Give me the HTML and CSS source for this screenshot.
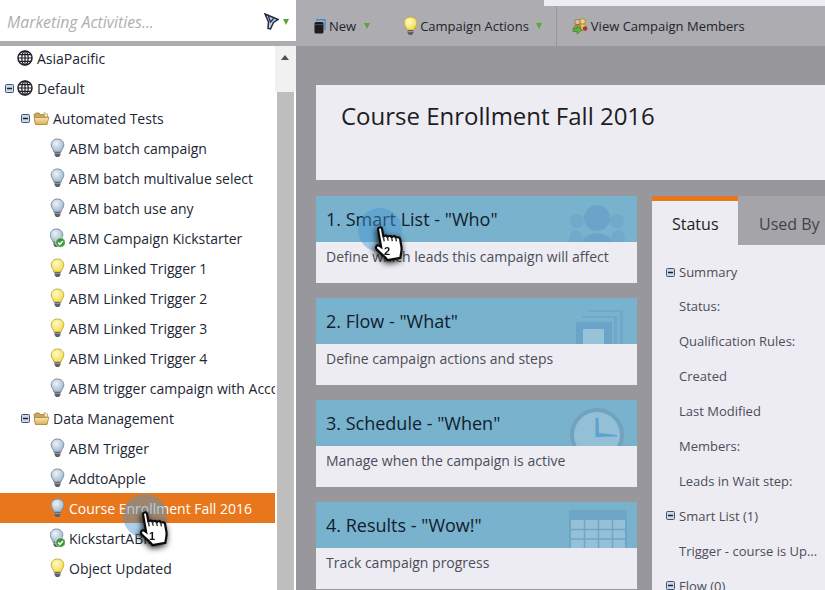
FILE: index.html
```html
<!DOCTYPE html>
<html lang="en">
<head>
    <meta charset="UTF-8">
    <meta name="viewport" content="width=device-width, initial-scale=1.0">
    <title>Course Enrollment Fall 2016</title>
    <link rel="stylesheet" href="styles.css">
</head>
<body>
    <!-- Shared icons -->
    <svg class="defs" aria-hidden="true">
        <defs>
            <radialGradient id="grayGlass" cx="40%" cy="35%" r="70%">
                <stop offset="0" stop-color="#eef3f8"/>
                <stop offset="1" stop-color="#9db4c9"/>
            </radialGradient>
            <radialGradient id="yellowGlass" cx="40%" cy="35%" r="70%">
                <stop offset="0" stop-color="#fffbc4"/>
                <stop offset="1" stop-color="#f3da4a"/>
            </radialGradient>
            <linearGradient id="folderFill" x1="0" y1="0" x2="0" y2="1">
                <stop offset="0" stop-color="#fbe9b4"/>
                <stop offset="1" stop-color="#dcae55"/>
            </linearGradient>
        </defs>
        <symbol id="globe" viewBox="0 0 16 16">
            <circle cx="8" cy="8" r="7" fill="#fff" stroke="#1f1f23" stroke-width="1.500"/>
            <ellipse cx="8" cy="8" rx="3.200" ry="7" fill="none" stroke="#1f1f23" stroke-width="1.200"/>
            <path d="M8 1v14M1 8h14M2 4.600h12M2 11.400h12" fill="none" stroke="#1f1f23" stroke-width="1.200"/>
        </symbol>
        <symbol id="minus" viewBox="0 0 9 9">
            <rect x=".5" y=".5" width="8" height="8" rx="1" fill="#cfd8e4" stroke="#3d5477"/>
            <path d="M2 4.500h5" stroke="#14233c" stroke-width="1.500"/>
        </symbol>
        <symbol id="folder" viewBox="0 0 17 15">
            <path d="M1 3.500 3 2h3l1.500 1.500H14V13H2.500z" fill="#c9a65c" stroke="#8f7433" stroke-width=".7"/>
            <path d="M2.500 13.500 1 6.500h11.500L16 6l-2 7.500z" fill="url(#folderFill)" stroke="#a0803a" stroke-width=".7"/>
            <path d="M11 1.500 14.500 3v3h-3z" fill="#f5e7bd" stroke="#a0803a" stroke-width=".5"/>
        </symbol>
        <symbol id="bulbGray" viewBox="0 0 15 20">
            <path d="M7.500 1C3.800 1 1.200 3.600 1.200 6.800c0 3 2.300 4.400 2.800 7.200h7c.5-2.800 2.800-4.200 2.800-7.200C13.800 3.600 11.200 1 7.500 1z" fill="url(#grayGlass)" stroke="#7a8ea3"/>
            <path d="M4.500 14h6v3l-1.500 2h-3l-1.500-2z" fill="#5f6368"/>
            <path d="M4.500 15.400h6" stroke="#b5b8bc" stroke-width=".7"/>
        </symbol>
        <symbol id="bulbYellow" viewBox="0 0 15 20">
            <path d="M7.500 1C3.800 1 1.200 3.600 1.200 6.800c0 3 2.300 4.400 2.800 7.200h7c.5-2.800 2.800-4.200 2.800-7.200C13.800 3.600 11.200 1 7.500 1z" fill="url(#yellowGlass)" stroke="#c8ad3a"/>
            <path d="M4.500 14h6v3l-1.500 2h-3l-1.500-2z" fill="#5f6368"/>
            <path d="M4.500 15.400h6" stroke="#b5b8bc" stroke-width=".7"/>
        </symbol>
        <symbol id="bulbCheck" viewBox="0 0 15 20">
            <use href="#bulbGray" width="15" height="20" x="-1" y="0"/>
            <circle cx="10.500" cy="14.500" r="4.800" fill="#3b9a3f" stroke="#fff" stroke-width=".6"/>
            <path d="M8.200 14.600l1.700 1.700 3-3.200" fill="none" stroke="#fff" stroke-width="1.500"/>
        </symbol>
        <symbol id="pointer" viewBox="0 0 40 42">
            <g transform="rotate(-10 9 3)" stroke="#0c0c0c">
                <path d="M7 3c0-2 4-2 4 0v9c0-2 4-2 4 0v1c0-2 4-2 4 0v1c0-2 4-2 4 0v1c0-1 4-1 4 1v8c0 5-2 7-3 11H11c-1-3-6-8-9-13-1-2 1-4 3-3l2 2z" fill="#fff" stroke-width="2.200"/>
                <path d="M11 12v4M15 13v3M19 14v3M23 15v3" fill="none" stroke-width="1.200"/>
            </g>
        </symbol>
    </svg>

    <div class="app">
        <!-- Left tree -->
        <aside class="side">
            <div class="side-head">
                <span class="search">Marketing Activities...</span>
                <svg class="funnel" width="15" height="17" viewBox="0 0 15 17">
                    <path d="M1 1 14 6.500 9.500 9.500 6.500 16 4 15.500 4.500 9z" fill="#c7ced9" stroke="#1f2c47" stroke-width="1.500"/>
                    <path d="M4 2 6.500 9l3-3.500" fill="none" stroke="#1f2c47" stroke-width="1.200"/>
                </svg>
                <span class="arrow"></span>
            </div>
            <div class="side-body">
                <div class="tree">
                    <div class="rows">
                        <div class="row lvl1"><svg class="ico16"><use href="#globe"/></svg><span>AsiaPacific</span></div>
                        <div class="row lvl0"><svg class="tog"><use href="#minus"/></svg><svg class="ico16"><use href="#globe"/></svg><span>Default</span></div>
                        <div class="row lvl2"><svg class="tog"><use href="#minus"/></svg><svg class="ico-folder"><use href="#folder"/></svg><span>Automated Tests</span></div>
                        <div class="row leaf"><svg class="ico-bulb"><use href="#bulbGray"/></svg><span>ABM batch campaign</span></div>
                        <div class="row leaf"><svg class="ico-bulb"><use href="#bulbGray"/></svg><span>ABM batch multivalue select</span></div>
                        <div class="row leaf"><svg class="ico-bulb"><use href="#bulbGray"/></svg><span>ABM batch use any</span></div>
                        <div class="row leaf"><svg class="ico-bulb"><use href="#bulbCheck"/></svg><span>ABM Campaign Kickstarter</span></div>
                        <div class="row leaf"><svg class="ico-bulb"><use href="#bulbYellow"/></svg><span>ABM Linked Trigger 1</span></div>
                        <div class="row leaf"><svg class="ico-bulb"><use href="#bulbYellow"/></svg><span>ABM Linked Trigger 2</span></div>
                        <div class="row leaf"><svg class="ico-bulb"><use href="#bulbYellow"/></svg><span>ABM Linked Trigger 3</span></div>
                        <div class="row leaf"><svg class="ico-bulb"><use href="#bulbYellow"/></svg><span>ABM Linked Trigger 4</span></div>
                        <div class="row leaf"><svg class="ico-bulb"><use href="#bulbGray"/></svg><span>ABM trigger campaign with Account</span></div>
                        <div class="row lvl2"><svg class="tog"><use href="#minus"/></svg><svg class="ico-folder"><use href="#folder"/></svg><span>Data Management</span></div>
                        <div class="row leaf"><svg class="ico-bulb"><use href="#bulbGray"/></svg><span>ABM Trigger</span></div>
                        <div class="row leaf"><svg class="ico-bulb"><use href="#bulbGray"/></svg><span>AddtoApple</span></div>
                        <div class="row leaf selected"><svg class="ico-bulb"><use href="#bulbGray"/></svg><span>Course Enrollment Fall 2016</span></div>
                        <div class="row leaf"><svg class="ico-bulb"><use href="#bulbCheck"/></svg><span>KickstartABM</span></div>
                        <div class="row leaf"><svg class="ico-bulb"><use href="#bulbYellow"/></svg><span>Object Updated</span></div>
                    </div>
                </div>
                <div class="scrollbar">
                    <div class="scroll-up"><span class="scroll-arrow"></span></div>
                    <div class="scroll-track"><div class="scroll-thumb"></div></div>
                </div>
            </div>
        </aside>

        <!-- Main area -->
        <main class="main">
            <div class="strip"><div class="strip-gray"></div><div class="strip-light"></div></div>
            <div class="toolbar">
                <div class="tool tool-new">
                    <svg width="12" height="15" viewBox="0 0 12 15">
                        <path d="M3 2V.8h8V11" fill="none" stroke="#3f8fd0" stroke-width="1.400"/>
                        <rect x=".5" y="3" width="9" height="11.500" rx="1.500" fill="#1c1c1e"/>
                        <path d="M.5 5.500h9" stroke="#55565a" stroke-width=".8"/>
                    </svg>
                    <span>New</span><span class="arrow"></span>
                </div>
                <div class="tool tool-actions">
                    <svg class="ico-bulb"><use href="#bulbYellow"/></svg>
                    <span>Campaign Actions</span><span class="arrow"></span>
                </div>
                <div class="tool-sep"></div>
                <div class="tool tool-members">
                    <svg width="16" height="16" viewBox="0 0 16 16">
                        <circle cx="10.500" cy="3.500" r="2.800" fill="#f3d36b" stroke="#8a7330" stroke-width=".6"/>
                        <path d="M7 12c0-4 1-6 3.500-6S15 8 15 12z" fill="#e8c75c" stroke="#8a7330" stroke-width=".6"/>
                        <circle cx="5.500" cy="4" r="2.800" fill="#e4bb8c" stroke="#6e5330" stroke-width=".6"/>
                        <path d="M2 12c0-4 1-5.500 3.500-5.500S9 8 9 12z" fill="#b88f5e" stroke="#6e5330" stroke-width=".6"/>
                        <circle cx="13" cy="10.500" r="2.200" fill="#b5303a"/>
                        <path d="M1 10.500h4V8l5 4-5 4v-2.500H1z" fill="#57b83a" stroke="#2e7a22" stroke-width=".6"/>
                    </svg>
                    <span>View Campaign Members</span>
                </div>
            </div>

            <div class="content">
                <div class="title-card">
                    <h1>Course Enrollment Fall 2016</h1>
                </div>
                <div class="columns">
                    <div class="steps">
                        <section class="step">
                            <div class="step-head">
                                <h2>1. Smart List - "Who"</h2>
                                <svg class="step-ico" width="60" height="46" viewBox="0 0 60 46">
                                    <circle cx="8" cy="25" r="7" fill="#70a9c9"/>
                                    <circle cx="48" cy="25" r="7" fill="#70a9c9"/>
                                    <ellipse cx="7" cy="44" rx="7" ry="10" fill="#70a9c9"/>
                                    <ellipse cx="49" cy="44" rx="7" ry="10" fill="#70a9c9"/>
                                    <circle cx="28" cy="22" r="13" fill="#6aa4c9"/>
                                    <ellipse cx="28" cy="50" rx="16" ry="13" fill="#6aa4c9"/>
                                </svg>
                            </div>
                            <p>Define which leads this campaign will affect</p>
                        </section>
                        <section class="step">
                            <div class="step-head">
                                <h2>2. Flow - "What"</h2>
                                <svg class="step-ico" width="60" height="46" viewBox="0 0 60 46">
                                    <path d="M19 12h35v34h-3V14H19z" fill="#6fa8c8"/>
                                    <path d="M13 18h35v28h-3V20H13z" fill="#6fa8c8"/>
                                    <rect x="7" y="24" width="36" height="22" fill="#6aa4c9"/>
                                    <rect x="14" y="31" width="21" height="15" fill="#97c3d9"/>
                                </svg>
                            </div>
                            <p>Define campaign actions and steps</p>
                        </section>
                        <section class="step">
                            <div class="step-head">
                                <h2>3. Schedule - "When"</h2>
                                <svg class="step-ico" width="60" height="46" viewBox="0 0 60 46">
                                    <circle cx="28" cy="35" r="25" fill="#93c0d7" stroke="#6fa3bf" stroke-width="4"/>
                                    <path d="M26.500 18H29.500L30 33L48 35v1.500L26.500 37z" fill="#5fa1cf"/>
                                </svg>
                            </div>
                            <p>Manage when the campaign is active</p>
                        </section>
                        <section class="step">
                            <div class="step-head">
                                <h2>4. Results - "Wow!"</h2>
                                <svg class="step-ico" width="60" height="46" viewBox="0 0 60 46">
                                    <rect y="8" width="58" height="38" fill="#6fa6c6"/>
                                    <rect x="2" y="18" width="54" height="28" fill="#95c1d8"/>
                                    <path d="M15.500 8v38M29.500 8v38M43.500 8v38M0 27.500h58M0 37h58" stroke="#6fa6c6" stroke-width="1.500"/>
                                </svg>
                            </div>
                            <p>Track campaign progress</p>
                        </section>
                    </div>

                    <div class="status">
                        <div class="tabs">
                            <div class="tab active">Status</div>
                            <div class="tab">Used By</div>
                        </div>
                        <div class="status-list">
                            <div class="status-row group"><svg class="tog"><use href="#minus"/></svg><span>Summary</span></div>
                            <div class="status-row">Status:</div>
                            <div class="status-row">Qualification Rules:</div>
                            <div class="status-row">Created</div>
                            <div class="status-row">Last Modified</div>
                            <div class="status-row">Members:</div>
                            <div class="status-row">Leads in Wait step:</div>
                            <div class="status-row group"><svg class="tog"><use href="#minus"/></svg><span>Smart List (1)</span></div>
                            <div class="status-row">Trigger - course is Up...</div>
                            <div class="status-row group"><svg class="tog"><use href="#minus"/></svg><span>Flow (0)</span></div>
                        </div>
                    </div>
                </div>
            </div>
        </main>

        <!-- Tutorial pointers, they sit over the page -->
        <div class="spot spot-tree"></div>
        <div class="spot spot-step"></div>
        <svg class="hand hand-tree" width="40" height="42" viewBox="0 0 40 42">
            <use href="#pointer" width="40" height="42"/>
            <text x="13" y="29" class="hand-num">1</text>
        </svg>
        <svg class="hand hand-step" width="40" height="42" viewBox="0 0 40 42">
            <use href="#pointer" width="40" height="42"/>
            <text x="13" y="29" class="hand-num">2</text>
        </svg>
    </div>
</body>
</html>
```

FILE: styles.css
```css
* {
    box-sizing: border-box;
}
html, body {
    margin: 0;
    height: 100%;
    overflow: hidden;
}
body {
    font-family: "Open Sans", sans-serif;
    color: #22242c;
}
.defs {
    position: absolute;
    width: 0;
    height: 0;
}
.app {
    position: relative;
    display: flex;
    width: 825px;
    height: 590px;
    overflow: hidden;
    background: #98979b;
}

/* left tree */
.side {
    display: flex;
    flex-direction: column;
    width: 296px;
    flex: none;
    background: #fff;
}
.side-head {
    display: flex;
    align-items: center;
    height: 46px;
    padding: 2px 7px 0 7px;
    background: #fff;
    border-bottom: 5px solid #adacb1;
}
.search {
    flex: 1;
    font-size: 15.8px;
    font-style: italic;
    color: #aeaeb2;
}
.funnel {
    margin-right: 4px;
}
.arrow {
    display: inline-block;
    width: 0;
    height: 0;
    border-left: 3.5px solid transparent;
    border-right: 3.5px solid transparent;
    border-top: 6px solid #58a63a;
}
.side-body {
    display: flex;
    flex: 1;
    min-height: 0;
}
.tree {
    width: 275px;
    flex: none;
    overflow: hidden;
}
.rows {
    margin-top: -3px;
}
.row {
    display: flex;
    align-items: center;
    height: 30px;
    font-size: 14px;
    white-space: nowrap;
    overflow: hidden;
    color: #1c2733;
}
.row svg {
    flex: none;
}
.lvl0 {
    padding-left: 5px;
}
.lvl1 {
    padding-left: 17px;
}
.lvl2 {
    padding-left: 21px;
}
.leaf {
    padding-left: 50px;
}
.selected {
    background: #e8771c;
    color: #fff;
}
.tog {
    width: 9px;
    height: 9px;
    flex: none;
}
.ico16 {
    width: 16px;
    height: 16px;
    margin-right: 4px;
}
.lvl0 .ico16 {
    margin-left: 3px;
}
.ico-folder {
    width: 17px;
    height: 15px;
    margin: 0 3px;
}
.ico-bulb {
    width: 15px;
    height: 20px;
    margin-right: 4px;
}
.scrollbar {
    display: flex;
    flex-direction: column;
    width: 21px;
    flex: none;
}
.scroll-up {
    display: flex;
    justify-content: center;
    height: 46px;
    padding: 9px 2px 0 0;
    background: #f1f1f1;
}
.scroll-arrow {
    width: 0;
    height: 0;
    border-left: 4.5px solid transparent;
    border-right: 4.5px solid transparent;
    border-bottom: 5px solid #505050;
}
.scroll-track {
    flex: 1;
    padding: 0 2px;
    background: #fff;
}
.scroll-thumb {
    height: 100%;
    background: #bebebe;
}

/* main */
.main {
    flex: 1;
    min-width: 0;
}
.strip {
    display: flex;
    height: 6px;
}
.strip-gray {
    width: 248px;
    background: #adacb1;
}
.strip-light {
    flex: 1;
    background: #edecf2;
}
.toolbar {
    display: flex;
    align-items: center;
    height: 40px;
    background: #adacb1;
    font-size: 13px;
}
.tool {
    display: flex;
    align-items: center;
}
.tool-new {
    padding-left: 18px;
}
.tool-new span:first-of-type {
    margin: 0 8px 0 3px;
}
.tool-actions {
    padding-left: 33px;
}
.tool-actions .ico-bulb {
    width: 15px;
    height: 20px;
    margin-right: 2px;
}
.tool-actions span:first-of-type {
    margin-right: 7px;
}
.tool-sep {
    align-self: stretch;
    width: 1px;
    margin-left: 14px;
    background: #98979b;
}
.tool-members {
    padding-left: 15px;
}
.tool-members svg {
    margin-right: 3px;
}
.content {
    padding: 39px 0 0 20px;
}
.title-card {
    width: 509px;
    height: 95px;
    padding: 13px 25px;
    background: #edecf2;
}
h1 {
    margin: 0;
    font-size: 24px;
    font-weight: 400;
    line-height: 36px;
    color: #1c1c24;
    white-space: nowrap;
}
.columns {
    display: flex;
    gap: 15px;
    margin-top: 16px;
}
.steps {
    display: flex;
    flex-direction: column;
    gap: 15px;
    width: 321px;
    flex: none;
}
.step {
    height: 87px;
    background: #edecf2;
}
.step-head {
    display: flex;
    justify-content: space-between;
    align-items: center;
    height: 46px;
    padding: 0 8px 0 10px;
    background: #78b2cd;
}
.step-ico {
    align-self: flex-end;
}
h2 {
    margin: 0;
    font-size: 18px;
    font-weight: 400;
    color: #12202e;
}
.step p {
    margin: 0;
    padding: 5px 10px;
    font-size: 14px;
    line-height: 20px;
    color: #4c4d5a;
}
.status {
    flex: 1;
    min-width: 0;
    background: #edecf2;
    height: 400px;
}
.tabs {
    display: flex;
    height: 49px;
}
.tab {
    padding: 14px 21px 0;
    font-size: 16px;
    line-height: 28px;
    white-space: nowrap;
    flex: 1;
    background: #a5a4a9;
    color: #42424c;
}
.tab.active {
    flex: none;
    width: 86px;
    padding-top: 9px;
    padding-left: 20px;
    border-top: 5px solid #e8771c;
    background: #edecf2;
    color: #1c1c24;
}
.status-list {
    padding-top: 9px;
}
.status-row {
    display: flex;
    align-items: center;
    height: 35px;
    padding-left: 27px;
    font-size: 13px;
    color: #4c4d5a;
    white-space: nowrap;
}
.status-row:first-child {
    height: 34px;
    padding-top: 2px;
}
.status-row.group {
    padding-left: 14px;
}
.status-row .tog {
    margin-right: 4px;
}

/* pointers */
.spot {
    position: absolute;
    width: 44px;
    height: 44px;
    border-radius: 50%;
    background: rgba(70, 150, 210, .45);
    filter: blur(.6px);
}
.spot-tree {
    left: 123px;
    top: 494px;
}
.spot-step {
    left: 358px;
    top: 208px;
}
.hand {
    position: absolute;
    filter: drop-shadow(-1px 2px 3px rgba(0, 0, 0, .9));
}
.hand-tree {
    left: 136px;
    top: 511px;
}
.hand-step {
    left: 371px;
    top: 226px;
}
.hand-num {
    font-family: "Liberation Sans", sans-serif;
    font-size: 11px;
    font-weight: 700;
    fill: #111;
}
```
